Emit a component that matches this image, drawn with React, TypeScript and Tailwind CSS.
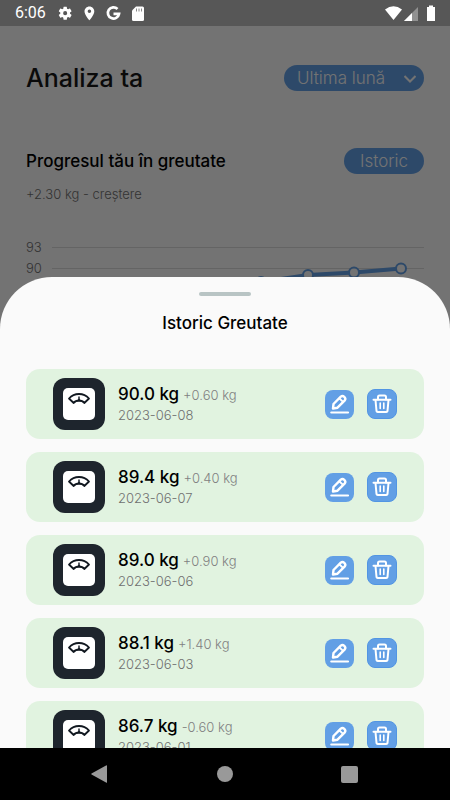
import { useState } from "react";

type Entry = {
  date: string;
  weight: string;
  diff: string;
};

const entries: Entry[] = [
  { date: "2023-06-08", weight: "90.0", diff: "+0.60" },
  { date: "2023-06-07", weight: "89.4", diff: "+0.40" },
  { date: "2023-06-06", weight: "89.0", diff: "+0.90" },
  { date: "2023-06-03", weight: "88.1", diff: "+1.40" },
  { date: "2023-06-01", weight: "86.7", diff: "-0.60" },
];

const StatusBar = () => (
  <header className="flex h-[26px] items-center justify-between bg-[#575757] pl-[15px] pr-3 text-white">
    <div className="flex items-center">
      <span className="w-[42px] font-[Roboto] text-base font-normal">6:06</span>
      <svg width="98" height="18" viewBox="0 0 98 18" fill="currentColor">
        <path
          transform="translate(0 1) scale(.68)"
          d="M19.14 12.94c.04-.3.06-.61.06-.94s-.02-.64-.07-.94l2.03-1.58a.5.5 0 0 0 .12-.61l-1.92-3.32a.5.5 0 0 0-.59-.22l-2.39.96a7 7 0 0 0-1.62-.94l-.36-2.54a.48.48 0 0 0-.48-.41h-3.84a.48.48 0 0 0-.47.41l-.36 2.54a7.3 7.3 0 0 0-1.62.94l-2.39-.96a.48.48 0 0 0-.59.22L2.74 8.87a.48.48 0 0 0 .12.61l2.03 1.58a6 6 0 0 0 0 1.88l-2.03 1.58a.5.5 0 0 0-.12.61l1.92 3.32c.12.22.37.29.59.22l2.39-.96c.5.38 1.03.7 1.62.94l.36 2.54c.05.24.24.41.48.41h3.84c.24 0 .44-.17.47-.41l.36-2.54a7 7 0 0 0 1.62-.94l2.39.96c.22.08.47 0 .59-.22l1.92-3.32a.5.5 0 0 0-.12-.61zM12 15a3 3 0 1 1 0-6 3 3 0 0 1 0 6z"
        />
        <path
          transform="translate(24 1) scale(.7)"
          d="M12 2C8.13 2 5 5.13 5 9c0 5.25 7 13 7 13s7-7.75 7-13c0-3.87-3.13-7-7-7zm0 9.5a2.5 2.5 0 1 1 0-5 2.5 2.5 0 0 1 0 5z"
        />
        <path d="M60.500 5A5.600 5.600 0 1 0 62 9.900H56.500" fill="none" stroke="currentColor" strokeWidth="2.700" />
        <path d="M79 2.500h6.500q1.500 0 1.500 1.500v11.500q0 1.500-1.500 1.500h-9q-1.500 0-1.500-1.500V6.500z" />
        <path d="M79.500 4.500v3M82 4.500v3M84.500 4.500v3" stroke="#8a8a8a" strokeWidth="1" />
      </svg>
    </div>
    <svg width="54" height="18" viewBox="0 0 54 18" fill="currentColor">
      <path d="M1 5.500Q9.500-1 18 5.500L9.500 16z" />
      <path d="M34 3v14H20z" opacity=".35" />
      <path d="M28 9v8h-8z" />
      <path d="M43 3h2V1.500h4V3h2v14h-8z" />
    </svg>
  </header>
);

const WeightChart = () => (
  <div className="mt-[35px] flex gap-[10px]">
    <div className="flex w-4 flex-col gap-[5px] text-[13px] leading-4 font-light text-[#707070]">
      <span>93</span>
      <span>90</span>
      <span>87</span>
      <span>84</span>
    </div>
    <svg className="h-20 flex-1" viewBox="0 0 372 80" preserveAspectRatio="xMaxYMin meet">
      <path d="M0 8.500h372M0 29.500h372M0 50.500h372M0 71.500h372" stroke="#dadada" />
      <g fill="#fafafa" stroke="#629fe5">
        <path d="M162 53 209 43 256 36 302 33.500 349 29.500" fill="none" strokeWidth="4" />
        <g strokeWidth="2">
          <circle cx="209" cy="43" r="5" />
          <circle cx="256" cy="36" r="5" />
          <circle cx="302" cy="33.500" r="5" />
          <circle cx="349" cy="29.500" r="5" />
        </g>
      </g>
    </svg>
  </div>
);

const ScaleIcon = () => (
  <div className="flex size-[52px] items-center justify-center rounded-xl bg-[#1e252d]">
    <svg width="32" height="32" viewBox="0 0 32 32" fill="none" stroke="#111820">
      <rect width="32" height="32" rx="5" fill="white" stroke="none" />
      <path
        d="M6 10.500Q10 6 16 6T26 10.500L21.300 15Q19.500 12.500 16 12.500T10.700 15Z"
        strokeWidth="1.800"
        strokeLinejoin="round"
      />
      <path d="M16 13V8.500" strokeWidth="1.400" />
      <path d="M13.500 13.500 16 10.500 18.500 13.500Z" fill="#111820" stroke="none" />
    </svg>
  </div>
);

const EditIcon = () => (
  <svg width="29" height="29" viewBox="0 0 29 29" fill="none" stroke="white" strokeLinecap="round" strokeLinejoin="round">
    <path d="M8 18.500 8.500 14 15.800 6.600Q17.500 5.200 19.300 6.800T19.800 10.300L12.500 17.700Z" strokeWidth="2.400" />
    <path d="M14.500 8.500 17.800 11.700" strokeWidth="1.800" />
    <path d="M6.300 22.500H23" strokeWidth="2.200" />
  </svg>
);

const TrashIcon = () => (
  <svg width="28" height="28" viewBox="1 1 28 28" fill="none" stroke="white" strokeLinecap="round" strokeLinejoin="round">
    <path d="M6.500 10.800H23.500M8.500 11 9.500 22Q9.700 23 10.700 23H19.300Q20.300 23 20.500 22L21.500 11" strokeWidth="2" />
    <path d="M11 10.500V8Q11 6.500 12.500 6.500H17.500Q19 6.500 19 8V10.500" strokeWidth="2" />
    <path d="M13.200 14V19.500M16.800 14V19.500" strokeWidth="1.600" />
  </svg>
);

const HistoryItem = ({ entry }: { entry: Entry }) => (
  <li className="flex h-[70px] shrink-0 items-center rounded-[14px] bg-[#e1f3e0] px-[27px]">
    <ScaleIcon />
    <div className="ml-[13px] flex-1">
      <div className="flex items-baseline gap-1">
        <span className="text-[17px] leading-5 font-medium text-black">{entry.weight} kg</span>
        <span className="text-[13px] leading-5 font-light text-[#808080]">{entry.diff} kg</span>
      </div>
      <div className="text-[13px] leading-5 font-light text-[#707070]">{entry.date}</div>
    </div>
    <div className="flex items-center gap-[13px]">
      <button aria-label="Editează" className="rounded-lg bg-[#629fe5]">
        <EditIcon />
      </button>
      <button aria-label="Șterge" className="rounded-lg border border-[#5295e3] bg-[#629fe5]">
        <TrashIcon />
      </button>
    </div>
  </li>
);

const App = () => {
  const [period, setPeriod] = useState("luna");

  return (
    <div className="flex h-screen flex-col overflow-hidden bg-[#fafafa] font-[Inter,sans-serif]">
      <main className="relative flex-1 overflow-hidden">
        <StatusBar />

        <section className="px-[26px] pt-9">
          <div className="flex items-center justify-between">
            <h1 className="text-[25px] leading-8 font-medium text-[#171717]">Analiza ta</h1>
            <div className="relative">
              <select
                aria-label="Perioada"
                value={period}
                onChange={(e) => setPeriod(e.target.value)}
                className="h-[26px] w-[140px] appearance-none rounded-full bg-[#629fe5] pl-[13px] text-[17px] leading-5 font-light text-[#fafafa]"
              >
                <option value="luna">Ultima lună</option>
                <option value="an">Ultimul an</option>
              </select>
              <svg
                className="pointer-events-none absolute top-2 right-2"
                width="12"
                height="12"
                viewBox="0 0 12 12"
                fill="none"
                stroke="#fafafa"
                strokeWidth="2"
              >
                <path d="M0.500 3 6 8.500 11.500 3" />
              </svg>
            </div>
          </div>

          <div className="mt-[54px] flex items-center justify-between">
            <h2 className="text-[17px] leading-6 font-medium text-black">Progresul tău în greutate</h2>
            <button className="h-[26px] w-20 rounded-full bg-[#629fe5] text-[17px] leading-5 font-light text-[#fafafa]">
              Istoric
            </button>
          </div>
          <p className="mt-[10px] text-[13px] leading-5 font-light text-[#707070]">+2.30 kg - creștere</p>
          <WeightChart />
        </section>

        <div className="absolute inset-x-0 top-[26px] bottom-0 bg-black/54" />

        {/* bottom sheet */}
        <section className="absolute inset-x-0 top-[277px] bottom-0 flex flex-col rounded-t-[52px] bg-[#fafafa]">
          <div className="mx-auto mt-[15px] h-1 w-[52px] shrink-0 rounded-full bg-[#b8c4c4]" />
          <h2 className="mt-[15px] text-center text-[17px] leading-6 font-medium text-black">Istoric Greutate</h2>
          <ul className="mt-[34px] flex flex-1 flex-col gap-[13px] overflow-y-auto px-[26px] [scrollbar-width:none]">
            {entries.map((entry) => (
              <HistoryItem key={entry.date} entry={entry} />
            ))}
          </ul>
        </section>
      </main>

      <nav className="grid h-[52px] grid-cols-3 place-items-center bg-black px-[38px] text-[#999999]">
        <button aria-label="Înapoi">
          <svg width="18" height="18" viewBox="0 0 18 18" fill="currentColor">
            <path d="M16 0.500V17.500Q16 18 15.500 17.800L0.500 9.500Q0 9 0.500 8.500L15.500 0.200Q16 0 16 0.500z" />
          </svg>
        </button>
        <button aria-label="Acasă" className="size-4 rounded-full bg-[#999999]" />
        <button aria-label="Recente" className="size-[17px] rounded-xs bg-[#999999]" />
      </nav>
    </div>
  );
};

export default App;
